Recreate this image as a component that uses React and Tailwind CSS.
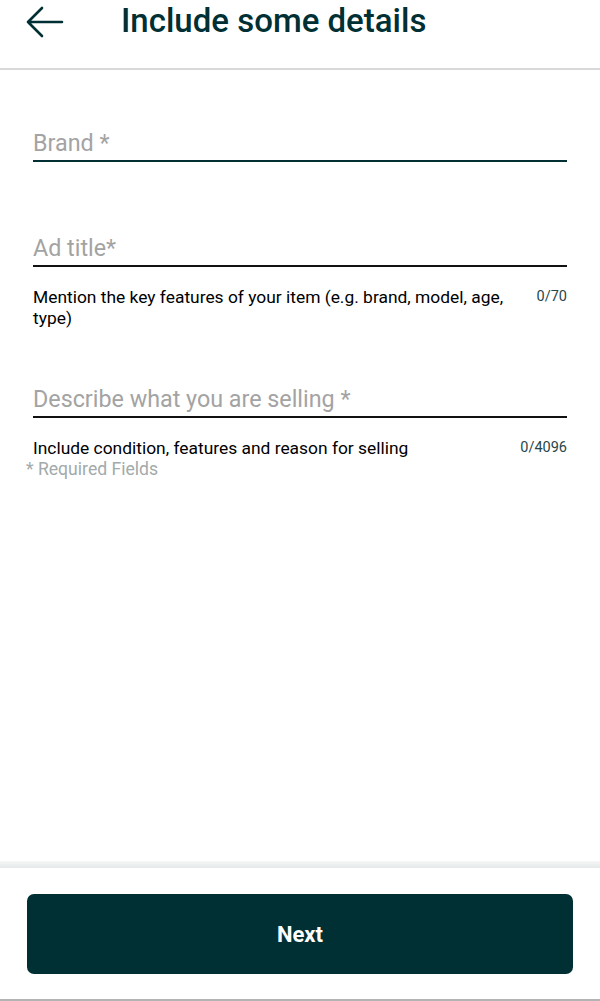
import { useState } from 'react';

const font = { fontFamily: 'Roboto, "Noto Sans", sans-serif' };

function BackArrow() {
  return (
    <svg width="40" height="34" viewBox="0 0 40 34" fill="none" aria-hidden>
      <path
        d="M3 17H37M17 3L3 17L17 31"
        stroke="#002f34"
        strokeWidth="2.6"
        strokeLinecap="round"
        strokeLinejoin="round"
      />
    </svg>
  );
}

function Field({ placeholder, value, onChange, lineClass }) {
  return (
    <input
      type="text"
      value={value}
      onChange={e => onChange(e.target.value)}
      placeholder={placeholder}
      className={`w-full h-[40px] pt-[4px] border-b-2 bg-transparent text-[23.3px] text-[#002f34] placeholder:text-[#a3a3a3] outline-none ${lineClass}`}
    />
  );
}

function Helper({ text, count }) {
  return (
    <div className="flex items-start justify-between gap-6 mt-[20px]">
      <p className="text-[17.4px] leading-[21px] text-black">{text}</p>
      <span className="shrink-0 pt-[1px] text-[14.5px] leading-[18px] text-[#28464a]">{count}</span>
    </div>
  );
}

export default function App() {
  const [brand, setBrand] = useState('');
  const [title, setTitle] = useState('');
  const [description, setDescription] = useState('');

  return (
    <div className="h-[1001px] w-full flex flex-col bg-white" style={font}>
      <header className="h-[70px] shrink-0 flex items-start border-b-2 border-[#d9d9d9]">
        <button type="button" aria-label="Back" className="ml-[25px] mt-[5px]">
          <BackArrow />
        </button>
        <h1 className="ml-[56px] pt-[2px] text-[33px] leading-[38px] font-medium text-[#002f34]">
          Include some details
        </h1>
      </header>

      <main className="flex-1 px-[33px] pt-[52px]">
        <Field placeholder="Brand *" value={brand} onChange={setBrand} lineClass="border-[#002f34]" />

        <div className="mt-[65px]">
          <Field placeholder="Ad title*" value={title} onChange={setTitle} lineClass="border-[#111]" />
          <Helper
            text="Mention the key features of your item (e.g. brand, model, age, type)"
            count={`${title.length}/70`}
          />
        </div>

        <div className="mt-[49px]">
          <Field
            placeholder="Describe what you are selling *"
            value={description}
            onChange={setDescription}
            lineClass="border-[#111]"
          />
          <Helper text="Include condition, features and reason for selling" count={`${description.length}/4096`} />
          <p className="-ml-[7px] text-[17.6px] leading-[21px] text-[#a2aaab]">* Required Fields</p>
        </div>
      </main>

      <footer className="shrink-0">
        <div className="h-[7px] bg-gradient-to-b from-[#f6f7f7] to-[#e5e9e9]" />
        <div className="px-[27px] pt-[26px] pb-[25px]">
          <button
            type="button"
            className="w-full h-[80px] rounded-[7px] bg-[#002f34] text-white text-[22px] font-bold"
          >
            Next
          </button>
        </div>
        <div className="h-[2px] bg-[#b3b3b3]" />
      </footer>
    </div>
  );
}
